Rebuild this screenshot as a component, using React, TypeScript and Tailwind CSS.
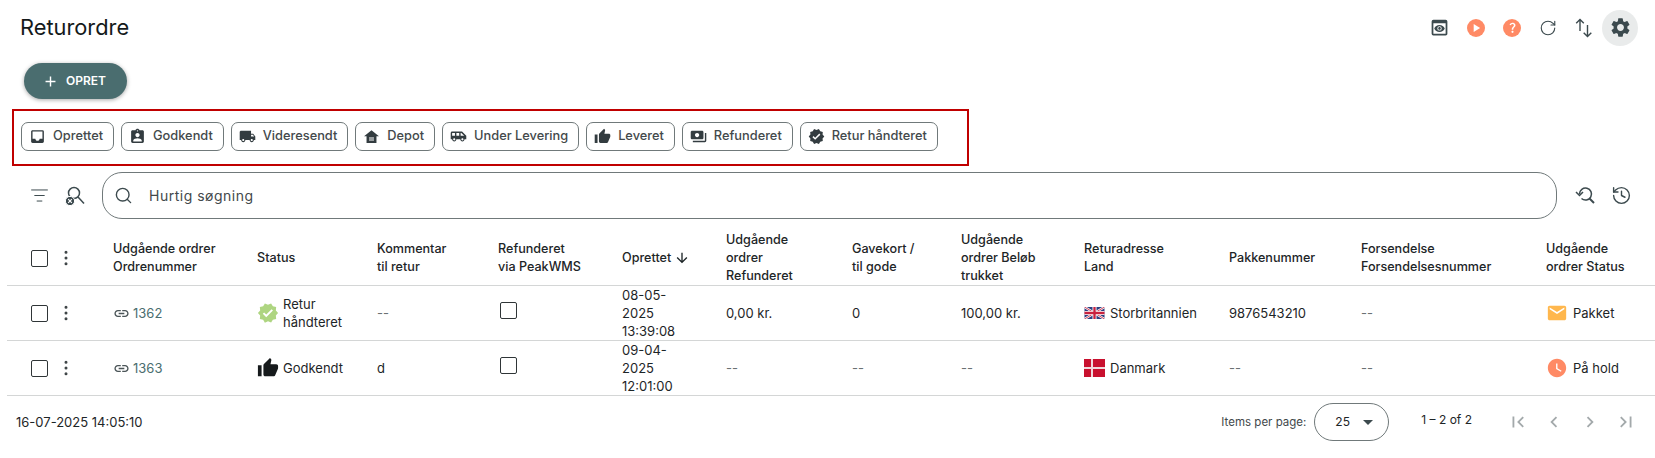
import React from "react";
import {
  MdInbox, MdAssignmentInd, MdLocalShipping, MdAirportShuttle, MdThumbUp, MdPayments, MdVerified,
  MdPreview, MdPlayArrow, MdQuestionMark, MdSettings, MdLink,
  MdArrowDownward, MdEmail, MdWatchLater, MdFirstPage, MdLastPage, MdChevronLeft, MdChevronRight, MdArrowDropDown,
  MdAdd,
} from "react-icons/md";
import { RotateCw, ListFilter, Search, History, EllipsisVertical } from "lucide-react";

function DepotIcon({ size, className }: { size?: number; className?: string }) {
  return (
    <svg width={size} height={size} viewBox="0 0 24 24" className={className} fill="currentColor">
      <path d="M12 3 1.5 11.5H5V21h14v-9.5h3.5z" />
      <path d="M8.5 13.5h7v1.3h-7zM8.5 16.3h7v1.3h-7z" fill="#fff" />
    </svg>
  );
}

const chips = [
  { t: "Oprettet", I: MdInbox },
  { t: "Godkendt", I: MdAssignmentInd },
  { t: "Videresendt", I: MdLocalShipping },
  { t: "Depot", I: DepotIcon },
  { t: "Under Levering", I: MdAirportShuttle },
  { t: "Leveret", I: MdThumbUp },
  { t: "Refunderet", I: MdPayments },
  { t: "Retur håndteret", I: MdVerified },
];

const gridClass =
  "grid grid-cols-[47px_59px_144px_120px_121px_124px_104px_126px_109px_123px_145px_132px_185px_1fr] items-center border-b border-[#d4d6d6] ml-[7px] pr-[2px]";

function Box({ className = "" }: { className?: string }) {
  return <span className={"block w-[17px] h-[17px] rounded-[2px] border-[1.5px] border-[#2f3537] " + className} />;
}

function Dash() {
  return <span className="text-[#6b7173]">--</span>;
}

function Kebab() {
  return <EllipsisVertical size={20} strokeWidth={1.6} className="text-[#3c4345] ml-[2px]" />;
}

function Uk() {
  return (
    <svg width="21" height="12" viewBox="0 0 60 36" className="shrink-0">
      <rect width="60" height="36" fill="#2b3f80" />
      <path d="M0 0 60 36M60 0 0 36" stroke="#fff" strokeWidth="7" />
      <path d="M0 0 60 36M60 0 0 36" stroke="#c8213f" strokeWidth="2.5" />
      <path d="M30 0V36M0 18H60" stroke="#fff" strokeWidth="12" />
      <path d="M30 0V36M0 18H60" stroke="#c8213f" strokeWidth="7" />
    </svg>
  );
}

function Dk() {
  return (
    <svg width="21" height="18" viewBox="0 0 21 18" className="shrink-0">
      <rect width="21" height="18" fill="#c8102e" />
      <path d="M8 0V18M0 9H21" stroke="#f0d8dc" strokeWidth="2" />
    </svg>
  );
}

function SwapIcon() {
  return (
    <svg width="22" height="24" viewBox="0 0 22 24" fill="none" stroke="currentColor" strokeWidth="1.4">
      <path d="M7 15V3.5M3.2 7.2 7 3.4l3.8 3.8" />
      <path d="M14.5 9v11.5M10.7 16.8l3.8 3.8 3.8-3.8" />
    </svg>
  );
}

function SearchOffIcon() {
  return (
    <svg width="24" height="24" viewBox="0 0 24 24" fill="none" stroke="currentColor" strokeWidth="1.5">
      <circle cx="11" cy="9" r="5.5" />
      <path d="M15 13l6 6.5" />
      <circle cx="7" cy="17" r="4.6" fill="currentColor" stroke="#fff" strokeWidth="1" />
      <path d="M5.2 15.2l3.6 3.6M8.8 15.2l-3.6 3.6" stroke="#fff" strokeWidth="1.2" />
    </svg>
  );
}

function HistorySearchIcon() {
  return (
    <svg width="24" height="24" viewBox="0 0 24 24" fill="none" stroke="currentColor" strokeWidth="1.5">
      <path d="M7.5 10a6 6 0 1 1 2 4.5" />
      <path d="M4 8l3.5 3.5L11 8" />
      <path d="M17.5 14.5 22 19" strokeWidth="1.9" />
    </svg>
  );
}

function Row({ cells }: { cells: React.ReactNode[] }) {
  return (
    <div className={gridClass + " h-[55px]"}>
      <div className="pl-[24px]"><Box /></div>
      <Kebab />
      {cells.map((c, i) => (
        <div key={i}>{c}</div>
      ))}
    </div>
  );
}

export default function App() {
  return (
    <div className="w-[1655px] h-[458px] overflow-hidden bg-white text-[13px] leading-[18px] text-[#1d2527] font-['Inter','Liberation_Sans',sans-serif]">
      <div className="flex items-center justify-between pt-[9px] pl-[20px] pr-[17px]">
        <h1 className="text-[21.8px] leading-[37px] font-normal text-[#14191a]">Returordre</h1>
        <div className="flex items-center text-[#3c4a4e]">
          <span className="w-9 h-9 flex items-center justify-center pr-[1px]"><MdPreview size={21} /></span>
          <span className="w-9 h-9 flex items-center justify-center">
            <span className="w-[18px] h-[18px] rounded-full bg-[#ff8a65] flex items-center justify-center text-white"><MdPlayArrow size={14} /></span>
          </span>
          <span className="w-9 h-9 flex items-center justify-center">
            <span className="w-[18px] h-[18px] rounded-full bg-[#ff8a65] flex items-center justify-center text-white"><MdQuestionMark size={13} /></span>
          </span>
          <span className="w-9 h-9 flex items-center justify-center"><RotateCw size={18} strokeWidth={1.5} /></span>
          <span className="w-9 h-9 flex items-center justify-center"><SwapIcon /></span>
          <span className="w-9 h-9 flex items-center justify-center rounded-full bg-[#e9ebeb]"><MdSettings size={23} /></span>
        </div>
      </div>

      <button className="mt-[17px] ml-[24px] w-[103px] h-[36px] rounded-full bg-[#4a6d6f] text-white text-[12px] font-semibold flex items-center justify-center gap-[7px] pr-[3px] shadow-[0_1px_4px_rgba(0,0,0,0.35)]">
        <MdAdd size={17} />
        OPRET
      </button>

      <div className="mt-[10px] ml-[12px] w-[957px] h-[57px] border-2 border-[#c00000] flex items-center gap-[7px] pl-[7px] pb-[3px]">
        {chips.map(({ t, I }) => (
          <span key={t} className="h-[29px] flex items-center pl-[7px] pr-[10px] border border-[#70797a] rounded-[7px] text-[12.8px] text-[#43494b] font-medium">
            <I size={17} className="shrink-0 text-[#333c40]" />
            <span className="ml-[7px]">{t}</span>
          </span>
        ))}
      </div>

      <div className="mt-[6px] h-[47px] flex items-center pl-[21px] text-[#3c4a4e]">
        <span className="w-9 flex justify-center"><ListFilter size={19} strokeWidth={1.25} /></span>
        <span className="w-9 flex justify-center"><SearchOffIcon /></span>
        <div className="ml-[9px] w-[1455px] h-[47px] border border-[#70797a] rounded-[20px] flex items-center pl-[11px] gap-[16px]">
          <Search size={19} strokeWidth={1.75} />
          <span className="text-[14px] text-[#43494b] tracking-[0.5px]">Hurtig søgning</span>
        </div>
        <span className="ml-[9px] w-9 flex justify-center"><HistorySearchIcon /></span>
        <span className="ml-[1px] w-9 flex justify-center"><History size={21} strokeWidth={1.6} /></span>
      </div>

      <div className={gridClass + " h-[55px] mt-[12px] font-medium text-[12.6px]"}>
        <div className="pl-[24px]"><Box /></div>
        <Kebab />
        <div>Udgående ordrer<br />Ordrenummer</div>
        <div>Status</div>
        <div>Kommentar<br />til retur</div>
        <div>Refunderet<br />via PeakWMS</div>
        <div className="flex items-center gap-[3px]">Oprettet <MdArrowDownward size={16} /></div>
        <div>Udgående<br />ordrer<br />Refunderet</div>
        <div>Gavekort /<br />til gode</div>
        <div>Udgående<br />ordrer Beløb<br />trukket</div>
        <div>Returadresse<br />Land</div>
        <div>Pakkenummer</div>
        <div>Forsendelse<br />Forsendelsesnummer</div>
        <div>Udgående<br />ordrer Status</div>
      </div>

      <Row
        cells={[
          <span className="flex items-center gap-[3px] text-[#4a6d6f]"><MdLink size={17} className="text-[#4b5558]" />1362</span>,
          <span className="flex items-center gap-[4px] w-[90px]"><MdVerified size={22} className="shrink-0 text-[#aed581]" /><span>Retur håndteret</span></span>,
          <Dash />,
          <span className="block pb-[6px]"><Box className="ml-[2px]" /></span>,
          <span className="block w-[66px]">08-05-2025 13:39:08</span>,
          "0,00 kr.",
          "0",
          "100,00 kr.",
          <span className="flex items-center gap-[5px]"><Uk />Storbritannien</span>,
          "9876543210",
          <Dash />,
          <span className="flex items-center gap-[5px]"><MdEmail size={22} className="text-[#ffb74d]" />Pakket</span>,
        ]}
      />
      <Row
        cells={[
          <span className="flex items-center gap-[3px] text-[#4a6d6f]"><MdLink size={17} className="text-[#4b5558]" />1363</span>,
          <span className="flex items-center gap-[4px]"><MdThumbUp size={22} className="shrink-0 text-[#161a1c]" />Godkendt</span>,
          "d",
          <span className="block pb-[6px]"><Box className="ml-[2px]" /></span>,
          <span className="block w-[66px]">09-04-2025 12:01:00</span>,
          <Dash />,
          <Dash />,
          <Dash />,
          <span className="flex items-center gap-[5px]"><Dk />Danmark</span>,
          <Dash />,
          <Dash />,
          <span className="flex items-center gap-[5px]"><MdWatchLater size={22} className="text-[#ff8a65]" />På hold</span>,
        ]}
      />

      <div className="h-[52px] flex items-center pl-[16px] pr-[11px]">
        <span>16-07-2025 14:05:10</span>
        <span className="ml-auto text-[11.5px] text-[#43494b]">Items per page:</span>
        <span className="ml-[8px] w-[75px] h-[38px] border border-[#70797a] rounded-[19px] flex items-center pl-[20px] text-[12px]">
          25
          <MdArrowDropDown size={24} className="ml-[6px] text-[#3c4a4e]" />
        </span>
        <span className="ml-[32px] mb-[4px] text-[12px]">1 – 2 of 2</span>
        <span className="ml-[28px] flex items-center text-[#a3a9ab]">
          <span className="w-9 flex justify-center"><MdFirstPage size={22} /></span>
          <span className="w-9 flex justify-center"><MdChevronLeft size={22} /></span>
          <span className="w-9 flex justify-center"><MdChevronRight size={22} /></span>
          <span className="w-9 flex justify-center"><MdLastPage size={22} /></span>
        </span>
      </div>
    </div>
  );
}
